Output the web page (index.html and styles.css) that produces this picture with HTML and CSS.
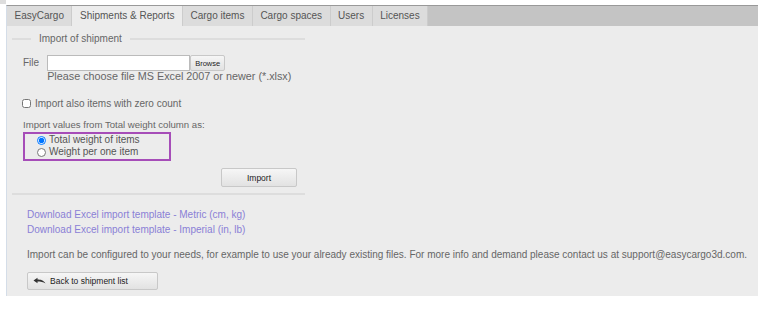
FILE: index.html
```html
<!DOCTYPE html>
<html lang="en">
  <head>
    <meta charset="UTF-8" />
    <title>EasyCargo - Import of shipment</title>
    <link rel="stylesheet" href="styles.css">
  </head>
  <body>
    <div class="corner"></div>
    <div class="panel">
      <ul class="tabs">
        <li>EasyCargo</li>
        <li class="active">Shipments &amp; Reports</li>
        <li>Cargo items</li>
        <li>Cargo spaces</li>
        <li>Users</li>
        <li>Licenses</li>
      </ul>
      <div class="content">
        <fieldset class="import">
          <legend>Import of shipment</legend>
          <div class="file-row">
            <span class="file-label">File</span>
            <div class="file-col">
              <div class="file-input">
                <span class="file-box"></span>
                <button class="btn browse">Browse</button>
              </div>
              <div class="hint">Please choose file MS Excel 2007 or newer (*.xlsx)</div>
            </div>
          </div>
          <label class="check">
            <input type="checkbox" />
            Import also items with zero count
          </label>
          <div class="weight-title">Import values from Total weight column as:</div>
          <div class="weight-box">
            <label class="radio"><input type="radio" name="weight" checked /> Total weight of items</label>
            <label class="radio"><input type="radio" name="weight" /> Weight per one item</label>
          </div>
          <div class="actions">
            <button class="btn import-btn">Import</button>
          </div>
        </fieldset>
        <div class="links">
          <a href="#">Download Excel import template - Metric (cm, kg)</a>
          <a href="#">Download Excel import template - Imperial (in, lb)</a>
        </div>
        <p class="note">Import can be configured to your needs, for example to use your already existing files. For more info and demand please contact us at support@easycargo3d.com.</p>
        <button class="btn back">
          <svg width="13" height="8" viewBox="0 0 13 8">
            <path d="M0.5 3.5 L4.5 0.8 L4.5 2.6 C7.5 2.6 10.5 3.2 12.5 6.5 C10.5 4.8 7.5 4.4 4.5 4.4 L4.5 6.2 Z" fill="#333" />
          </svg>
          Back to shipment list
        </button>
      </div>
    </div>
  </body>
</html>
```

FILE: styles.css
```css
body {
  margin: 0;
  font-family: 'Liberation Sans', Arial, sans-serif;
  font-size: 10px;
  line-height: 13px;
  color: #666;
  background: #fff;
}
.corner {
  width: 6px;
  height: 4px;
  background: #ddd;
}
.panel {
  margin: 1px 19px 0 6px;
  border-top: 1px solid #999;
  border-left: 1px solid #d4dde8;
  background: #ececec;
}
.tabs {
  display: flex;
  margin: 0;
  padding: 0;
  list-style: none;
  background: #c4c4c4;
  height: 20px;
}
.tabs li {
  padding: 0 7.5px;
  line-height: 20px;
  background: #dcdcdc;
  border-right: 1px solid #ccc;
  color: #555;
}
.tabs li.active {
  background: #ececec;
}
.content {
  padding: 6px 0 6px 5px;
}
.import {
  width: 293px;
  box-sizing: border-box;
  margin: 0;
  padding: 0 0 6px 11px;
  border: none;
  border-top: 2px solid #ddd;
  border-bottom: 2px solid #ddd;
}
.import legend {
  padding: 0 8px;
  margin-left: 8px;
  color: #666;
}
.file-row {
  display: flex;
  gap: 8px;
  margin-top: 10px;
}
.file-label {
  line-height: 16px;
}
.file-input {
  display: flex;
}
.file-box {
  width: 141px;
  height: 14px;
  background: #fff;
  border: 1px solid #bbb;
}
.btn {
  font-family: inherit;
  color: #222;
  background: linear-gradient(#f6f6f6, #e2e2e2);
  border: 1px solid #c8c8c8;
  border-radius: 2px;
  cursor: pointer;
}
.browse {
  font-size: 7.5px;
  padding: 0 4px;
  height: 16px;
}
.hint {
  font-size: 10.8px;
  line-height: 11px;
}
.check {
  display: flex;
  align-items: center;
  gap: 4px;
  margin: 15px 0 0 -1px;
}
.check input,
.radio input {
  margin: 0;
  width: 9px;
  height: 9px;
}
.weight-title {
  margin-top: 8px;
  font-size: 9.6px;
}
.weight-box {
  width: 132px;
  margin-top: 1px;
  padding: 0 0 1px 12px;
  border: 2px solid #a64db8;
}
.radio {
  display: flex;
  align-items: center;
  gap: 3px;
  line-height: 12px;
  color: #555;
}
.actions {
  padding: 7px 0 0 198px;
}
.import-btn {
  width: 76px;
  height: 19px;
  font-size: 8.5px;
}
.links {
  display: flex;
  flex-direction: column;
  gap: 2px;
  margin: 13px 0 0 15px;
}
.links a {
  color: #8a80d6;
  text-decoration: none;
}
.note {
  margin: 12px 0 0 15px;
  white-space: nowrap;
}
.back {
  display: flex;
  align-items: center;
  gap: 4px;
  margin: 11px 0 0 15px;
  width: 131px;
  height: 18px;
  font-size: 8.5px;
  padding: 0 5px;
}
```
